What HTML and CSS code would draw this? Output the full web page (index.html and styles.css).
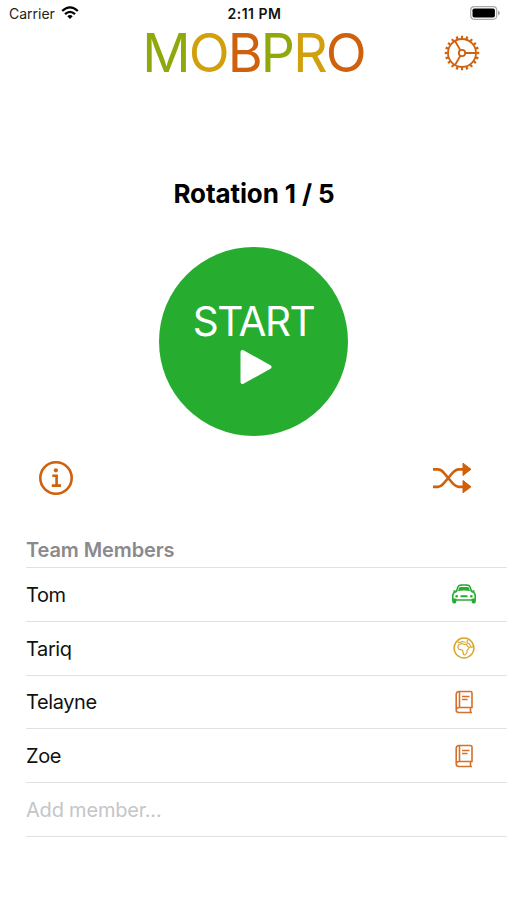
FILE: index.html
```
<!DOCTYPE html>
<html lang="en">
	<head>
		<title>MobPro</title>
		<meta charset="utf-8">
		<meta name="viewport" content="width=device-width,initial-scale=1.0">
		<link rel="stylesheet" href="styles.css">
	</head>
	<body>
		<svg class="defs" width="0" height="0">
			<symbol id="book" viewBox="0 0 18 24">
				<path d="M4 1.500H15.500Q17 1.500 17 3V17.500H3.500M4 1.500Q1.200 1.500 1.200 4.500V20Q1.200 22.500 4 22.500H17M1.200 20Q1.200 17.500 4 17.500M4.500 1.500V17.500M15.500 17.500V22.500M7 6.500H14.500M7 9.500H12.500"/>
			</symbol>
		</svg>

		<div class="status">
			<div class="carrier">
				<span>Carrier</span>
				<svg class="wifi" viewBox="0 0 18 14">
					<path d="M1.200 5Q9-2.200 16.800 5M4 8.100Q9 3.600 14 8.100"/>
					<path class="dot" d="M6.300 10.200Q9 8 11.700 10.200L9 13Z"/>
				</svg>
			</div>
			<div class="time">2:11 PM</div>
			<svg class="battery" viewBox="0 0 30 14">
				<rect class="shell" x=".7" y=".7" width="26" height="12.600" rx="3.500"/>
				<rect x="2.500" y="2.500" width="22.400" height="9" rx="1.800"/>
				<path class="cap" d="M28 4.500Q30 5.500 30 7T28 9.500Z"/>
			</svg>
		</div>

		<div class="header">
			<h1 class="logo"><span class="lime">M</span><span class="gold">O</span><span class="rust">B</span><span class="lime">P</span><span class="gold">R</span><span class="rust">O</span></h1>
			<svg class="gear" viewBox="0 0 36 36">
				<circle cx="18" cy="18" r="14"/>
				<circle class="teeth" cx="18" cy="18" r="15.900" pathLength="100"/>
				<circle cx="18" cy="18" r="3.200"/>
				<path d="M21.200 18H31.600M16.400 15.200L11.200 6.200M16.400 20.800L11.200 29.800"/>
			</svg>
		</div>

		<h2 class="rotation">Rotation 1 / 5</h2>

		<button type="button" class="start">
			<span>START</span>
			<svg class="play" viewBox="0 0 32 36">
				<path d="M2.500 3L29.500 18L2.500 33Z"/>
			</svg>
		</button>

		<div class="actions">
			<svg class="info" viewBox="0 0 36 36">
				<circle cx="18" cy="18" r="15.700"/>
				<circle class="dot" cx="17.900" cy="10.300" r="2.100"/>
				<path d="M14.300 15.800H18.600V25.400M13.800 25.600H23"/>
			</svg>
			<svg class="shuffle" viewBox="0 0 40 32">
				<path d="M1 7.300H5.500C8.500 7.300 10 8.500 12 11L20 20.500C22.500 23.500 24 24.800 27 24.800H31M1 24.800H5.500C8.500 24.800 10 23.500 12 21L20 11.500C22.500 8.500 24 7.300 27 7.300H31"/>
				<path class="head" d="M31 1.200L39 7.300L31 13.500ZM31 18.500L39 24.800L31 30.800Z"/>
			</svg>
		</div>

		<div class="members">
			<h3>Team Members</h3>
			<ul>
				<li>
					<span>Tom</span>
					<svg class="icon car" viewBox="0 0 26 20">
						<path d="M5.500 7.500L6.900 3Q7.500 1.200 9.500 1.100Q13 .8 16.500 1.100Q18.500 1.200 19.100 3L20.500 7.500Q23.500 8 24 10.500Q24.500 13 24 16H2Q1.500 13 2 10.500Q2.500 8 5.500 7.500Z"/>
						<path class="fill" d="M7 7L8 4Q8.400 3 9.500 2.900H16.500Q17.600 3 18 4L19 7Q13 6.100 7 7ZM1.300 14.500H5.300V18Q5.300 19.400 3.800 19.400H2.800Q1.300 19.400 1.300 18ZM20.700 14.500H24.700V18Q24.700 19.400 23.200 19.400H22.200Q20.700 19.400 20.700 18ZM9.500 11.200H16.500V13.300H9.500Z"/>
						<circle class="fill" cx="5.700" cy="12.300" r="1.300"/>
						<circle class="fill" cx="20.300" cy="12.300" r="1.300"/>
						<path d="M2.500 6.800L5 7.500M23.500 6.800L21 7.500"/>
					</svg>
				</li>
				<li>
					<span>Tariq</span>
					<svg class="icon globe" viewBox="0 0 22 22">
						<circle cx="11" cy="11" r="9.900"/>
						<path class="land" d="M6 7.500L8.500 6.500L11.500 7.500L13.500 7.300L14.500 9.500L16.300 10.500L14 13.500V15.500L12 18L10.500 17.500L9.500 13L6 12.300L4.700 10ZM4.500 4.800L7 5.500L9 4.500L12.500 5.500M14.500 3L14 6L16.500 7L18 10.500L20.500 9.500"/>
					</svg>
				</li>
				<li><span>Telayne</span><svg class="icon book"><use href="#book"/></svg></li>
				<li><span>Zoe</span><svg class="icon book"><use href="#book"/></svg></li>
				<li class="add"><span>Add member...</span></li>
			</ul>
		</div>
	</body>
</html>
```

FILE: styles.css
```
*{box-sizing:border-box;}
body{margin:0;background:#fff;color:#000;font-family:Inter,sans-serif;}
h1,h2,h3,ul{margin:0;padding:0;list-style:none;}
svg{display:block;flex:none;fill:none;stroke:currentColor;}
.defs{position:absolute;}

.lime{color:#8fa80c;}
.gold{color:#d1a00c;}
.rust{color:#cf600c;}

.status{display:grid;grid-template-columns:1fr auto 1fr;align-items:center;height:27px;padding:0 7px 0 9px;font-size:14px;line-height:17px;}
.carrier{display:flex;align-items:center;gap:6px;color:#222;}
.wifi{width:18px;height:14px;margin-top:-1px;color:#000;stroke-width:2.3;}
.wifi .dot{fill:#000;stroke:none;}
.time{font-weight:600;color:#111;letter-spacing:.5px;}
.battery{width:30px;height:14px;justify-self:end;margin-top:-1px;fill:#000;stroke:none;}
.battery .shell{fill:#fff;stroke:#aaa;stroke-width:1.2;}
.battery .cap{fill:#aaa;}

.header{display:grid;grid-template-columns:1fr auto 1fr;align-items:center;height:50px;margin-top:1px;padding:0 27px;}
.logo{display:flex;grid-column:2;font-size:53.5px;font-weight:400;line-height:50px;letter-spacing:-1.9px;}
.gear{width:36px;height:36px;justify-self:end;margin-top:-1px;color:#cf600c;stroke-width:1.8;}
.gear .teeth{stroke-width:2.6;stroke-dasharray:2.2 2.8;stroke-dashoffset:1.1;}

.rotation{margin-top:99px;padding-left:1px;line-height:34px;text-align:center;font-size:26px;font-weight:700;letter-spacing:-.1px;}

.start{display:flex;flex-direction:column;align-items:center;width:189px;height:189px;margin:36px auto 0;padding:50px 0 0;border:0;border-radius:50%;background:#26ad2f;color:#fff;font-family:inherit;font-size:40.5px;font-weight:400;line-height:50px;letter-spacing:-1.5px;}
.play{width:32px;height:36px;margin:2px 0 0 4px;fill:#fff;stroke-width:4;stroke-linejoin:round;}

.actions{display:flex;justify-content:space-between;align-items:center;height:36px;margin-top:24px;padding:0 35px 0 38px;color:#cf600c;}
.info{width:36px;height:36px;stroke-width:2.6;}
.info .dot{fill:currentColor;stroke:none;}
.shuffle{width:40px;height:32px;stroke-width:2.7;}
.shuffle .head{fill:currentColor;stroke-width:1;stroke-linejoin:round;}

.members{margin:38px 0 0 26px;}
.members h3{height:34px;border-bottom:1px solid #e1e1e1;line-height:33px;font-size:20px;font-weight:600;letter-spacing:-.1px;color:#8a8a8d;}
.members li{display:flex;justify-content:space-between;align-items:center;height:53.75px;padding:1px 30px 0 0;border-bottom:1px solid #e1e1e1;font-size:20px;letter-spacing:-.4px;color:#111;}
.members .add{color:#c5c5c7;letter-spacing:-.2px;}
.icon{margin-top:-1px;stroke-width:1.6;}
.car{width:26px;height:20px;color:#26ad2f;}
.car .fill{fill:currentColor;stroke:none;}
.globe{width:22px;height:22px;margin-right:2px;color:#d9a62e;stroke-width:1.5;}
.globe .land{stroke-width:1.2;stroke-linejoin:round;}
.book{width:18px;height:24px;margin-right:4px;color:#d5712a;stroke-width:1.6;}
```
